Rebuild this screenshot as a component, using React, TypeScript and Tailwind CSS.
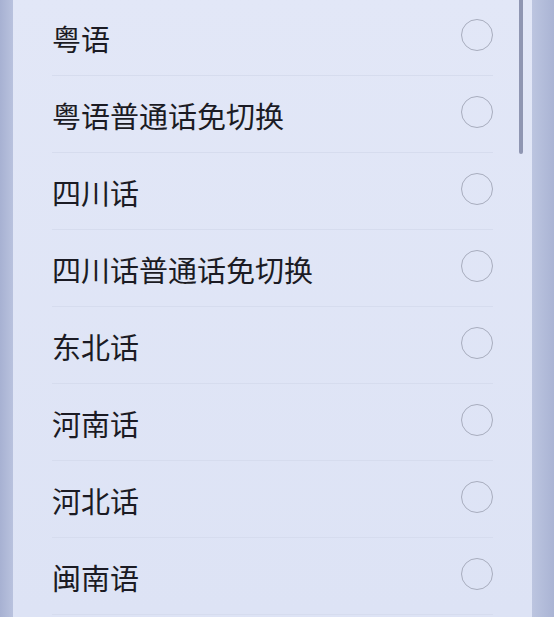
const dialects = [
  "粤语",
  "粤语普通话免切换",
  "四川话",
  "四川话普通话免切换",
  "东北话",
  "河南话",
  "河北话",
  "闽南语",
];

function Radio() {
  return <div className="size-[32px] shrink-0 rounded-full border-[1.5px] border-[#a8adbe] -translate-y-[4px]" />;
}

function DialectRow({ name }: { name: string }) {
  return (
    <div className="flex h-[77px] shrink-0 items-center justify-between border-b border-[#d6dcee] pt-[3px]">
      <span className="text-[29px] leading-none text-[#1b1b24]">{name}</span>
      <Radio />
    </div>
  );
}

export default function App() {
  return (
    <div className="flex h-[617px] w-[554px] overflow-hidden bg-[#b1bbd9] font-['Noto_Sans_CJK_SC','Noto_Sans',sans-serif]">
      <div className="w-[13px] shrink-0 bg-gradient-to-r from-[#a7b1d2] to-[#b9c2de]" />
      <div className="relative flex flex-1 flex-col overflow-hidden bg-gradient-to-b from-[#e2e7f7] to-[#dde3f5]">
        <div className="-mt-[1px] flex flex-col px-[39px]">
          {dialects.map((d) => (
            <DialectRow key={d} name={d} />
          ))}
        </div>
        <div className="absolute right-[9px] top-0 h-[154px] w-[4px] rounded-b-full bg-[#8f96b2]" />
      </div>
      <div className="w-[22px] shrink-0 bg-gradient-to-r from-[#bcc5e0] to-[#aab4d4]" />
    </div>
  );
}
